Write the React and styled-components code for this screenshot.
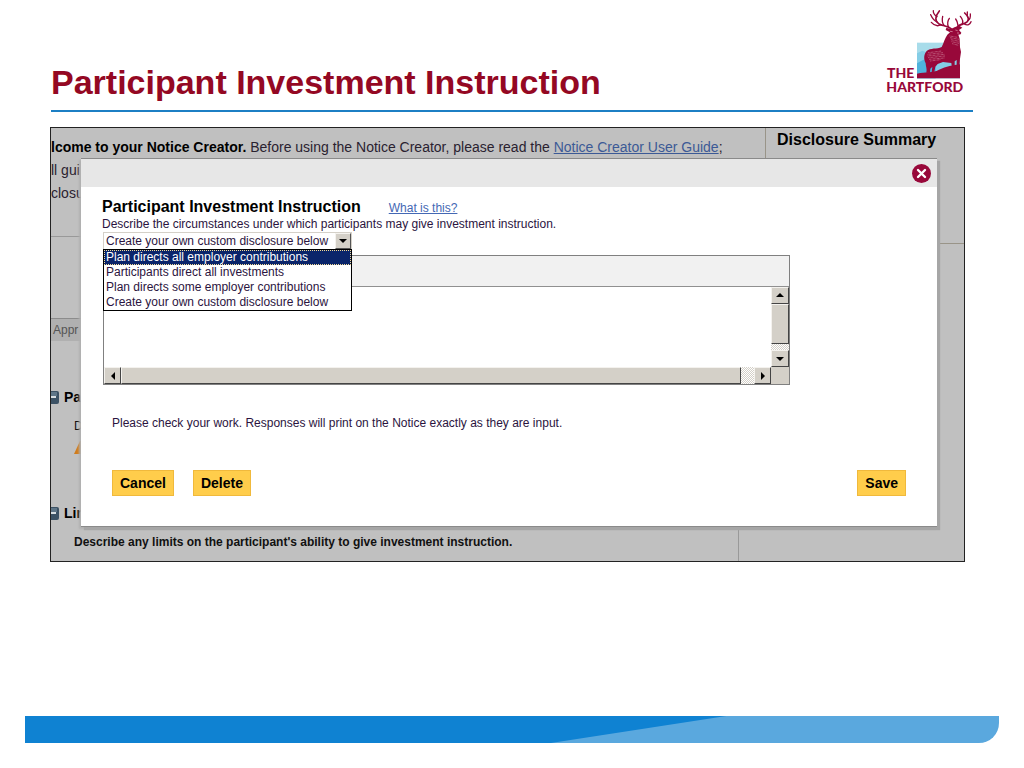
import React, { useState } from "react";
import styled, { createGlobalStyle } from "styled-components";

const disclosures = [
  "Plan directs all employer contributions",
  "Participants direct all investments",
  "Plan directs some employer contributions",
  "Create your own custom disclosure below"
];

const Logo = () => (
  <LogoArt viewBox="54 24 258 258" role="img" aria-label="The Hartford">
    <rect x="144" y="128" width="129" height="107" fill="#a8dcea" />
    <path d="M144 160 L160 152 L176 158 L190 150 L273 180 V235 H144Z" fill="#84cde6" />
    <path d="M144 190 L162 180 L176 176 L200 200 V235 H144Z" fill="#4fb2dc" />
    <path
      d="M144 221 C170 214 190 220 210 209 C232 199 252 195 273 193 V235 H144Z"
      fill="#98083a"
    />
    <path
      d="M172 218 C175 207 170 200 170 190 C163 176 165 162 173 153 C184 143 204 148 218 141
         C224 129 228 113 235 104 L243 97 L230 90 L232 83 L246 87 L258 81 L272 78 L280 83
         L270 90 L277 98 L275 103 L268 104 L272 116 L273 142 L276 156 L273 176 L271 200 L263 202
         L263 180 L257 184 L257 203 L249 205 L247 189 L222 186 L206 192 L199 200 L196 215
         L188 217 L190 200 L184 206 L183 219Z"
      fill="#98083a"
    />
    <g fill="none" stroke="#98083a" strokeLinecap="round" strokeLinejoin="round">
      <path
        strokeWidth="5"
        d="M249 88 C236 76 222 79 209 71 C197 63 198 49 211 33 M263 84 C269 70 285 75 295 65 C302 57 297 48 287 39"
      />
      <path
        strokeWidth="4"
        d="M205 66 C195 62 190 55 185 44 M204 50 C196 45 192 40 193 32 M216 74 C204 81 194 75 187 67
           M226 77 C217 67 219 58 221 49 M238 80 C234 69 236 62 241 55
           M297 61 C303 58 305 52 304 42 M296 51 C294 45 295 42 295 36
           M286 72 C296 78 303 73 306 65 M279 74 C284 64 281 57 274 49 M267 76 C266 67 264 62 260 57"
      />
    </g>
    <g fill="none" stroke="#e2a9b9" strokeWidth="2" strokeDasharray="2 2">
      <path
        d="M178 158 L218 153 M176 163 L222 158 M176 168 L226 163 M178 173 L228 168 M180 178 L226 174
           M184 183 L214 179 M242 108 L266 112 M243 113 L270 118 M246 119 L270 124 M248 125 L270 130 M250 131 L268 136"
      />
    </g>
    <path d="M243 94 l8 1 M259 90 l7 2 M264 99 l6 0" stroke="#e2a9b9" strokeWidth="2" />
    <LogoText x="54" y="235">THE</LogoText>
    <LogoText x="52" y="277">HARTFORD</LogoText>
  </LogoArt>
);

const Arrow = ({ direction }) => {
  const points = {
    up: "1,6 9,6 5,2",
    down: "1,3 9,3 5,7",
    left: "7,1 7,9 3,5",
    right: "3,1 3,9 7,5"
  };
  return (
    <svg width="10" height="10" viewBox="0 0 10 10" aria-hidden="true">
      <polygon points={points[direction]} fill="#000" />
    </svg>
  );
};

const Collapse = () => (
  <svg width="8" height="13" viewBox="0 0 8 13" aria-hidden="true">
    <path d="M0 0H6Q8 0 8 2V11Q8 13 6 13H0Z" fill="#3c5265" />
    <path d="M0 1H6V5H0Z" fill="#5f7688" />
    <path d="M0 5H5V7H0Z" fill="#d9dfe3" />
  </svg>
);

function App() {
  const [chosen, setChosen] = useState(disclosures[3]);
  const [text, setText] = useState("");

  return (
    <Slide>
      <GlobalStyle />
      <Header>
        <Title>Participant Investment Instruction</Title>
        <Logo />
      </Header>

      <Screen>
        <Backdrop>
          <TopRow>
            <Intro>
              <b>lcome to your Notice Creator.</b> Before using the Notice
              Creator, please read the <a href="#guide">Notice Creator User Guide</a>;
              <br />
              ll gui
              <br />
              closu
            </Intro>
            <Summary>Disclosure Summary</Summary>
          </TopRow>
          <BottomRow>
            <Sections>
              <Tab>Appr</Tab>
              <Section>
                <SectionTitle>
                  <Collapse /> Pa
                </SectionTitle>
                <SectionText>D</SectionText>
                <Warning width="14" height="13" viewBox="0 0 14 13" aria-hidden="true">
                  <path d="M0 13L6 0H14V13Z" fill="#d07c1c" />
                </Warning>
              </Section>
              <Section>
                <SectionTitle>
                  <Collapse /> Lir
                </SectionTitle>
                <SectionText $bold>
                  Describe any limits on the participant's ability to give
                  investment instruction.
                </SectionText>
              </Section>
            </Sections>
            <Side />
          </BottomRow>
        </Backdrop>

        <Modal role="dialog" aria-labelledby="modal-title">
          <ModalBar>
            <Close type="button" aria-label="Close">
              <svg width="19" height="19" viewBox="0 0 19 19">
                <circle cx="9.5" cy="9.5" r="9.5" fill="#98083a" />
                <path
                  d="M6 6L13 13M13 6L6 13"
                  stroke="#fff"
                  strokeWidth="2.4"
                  strokeLinecap="round"
                />
              </svg>
            </Close>
          </ModalBar>
          <ModalBody>
            <Heading>
              <h2 id="modal-title">Participant Investment Instruction</h2>
              <a href="#help">What is this?</a>
            </Heading>
            <Label htmlFor="disclosure">
              Describe the circumstances under which participants may give
              investment instruction.
            </Label>
            <SelectBox>
              <Select
                id="disclosure"
                value={chosen}
                onChange={e => setChosen(e.target.value)}
              >
                {disclosures.map(d => (
                  <option key={d}>{d}</option>
                ))}
              </Select>
              <SelectArrow>
                <Arrow direction="down" />
              </SelectArrow>
              <List role="listbox" aria-label="Disclosures">
                {disclosures.map((d, i) => (
                  <Item
                    key={d}
                    role="option"
                    aria-selected={i === 0}
                    $active={i === 0}
                    onClick={() => setChosen(d)}
                  >
                    {d}
                  </Item>
                ))}
              </List>
            </SelectBox>
            <Editor>
              <Toolbar />
              <TextBox
                aria-label="Custom disclosure"
                value={text}
                onChange={e => setText(e.target.value)}
              />
              <ScrollBar $vertical>
                <ScrollButton type="button" aria-label="Scroll up">
                  <Arrow direction="up" />
                </ScrollButton>
                <Thumb />
                <Track />
                <ScrollButton type="button" aria-label="Scroll down">
                  <Arrow direction="down" />
                </ScrollButton>
              </ScrollBar>
              <ScrollBar>
                <ScrollButton type="button" aria-label="Scroll left">
                  <Arrow direction="left" />
                </ScrollButton>
                <Thumb />
                <Track $wide />
                <ScrollButton type="button" aria-label="Scroll right">
                  <Arrow direction="right" />
                </ScrollButton>
              </ScrollBar>
              <Corner />
            </Editor>
            <Note>
              Please check your work. Responses will print on the Notice exactly
              as they are input.
            </Note>
            <Actions>
              <Button type="button">Cancel</Button>
              <Button type="button">Delete</Button>
              <Spacer />
              <Button type="button">Save</Button>
            </Actions>
          </ModalBody>
        </Modal>
      </Screen>

      <Footer />
    </Slide>
  );
}

const GlobalStyle = createGlobalStyle`
  * {
    box-sizing: border-box;
  }

  body {
    margin: 0;
    background: #fff;
    font-family: "Liberation Sans", Arial, sans-serif;
  }
`;

const Slide = styled.div`
  display: flex;
  flex-direction: column;
  min-height: 100vh;
  padding-bottom: 25px;
`;

const Header = styled.header`
  display: flex;
  justify-content: space-between;
  align-items: flex-end;
  margin: 0 51px;
  padding-top: 8px;
  border-bottom: 2px solid #1c7fc4;
`;

const Title = styled.h1`
  margin: 0;
  padding-bottom: 8px;
  color: #940823;
  font-size: 34px;
  line-height: 40px;
`;

const LogoArt = styled.svg`
  width: 86px;
  height: 86px;
  margin-bottom: 16px;
  overflow: visible;
`;

const LogoText = styled.text`
  fill: #98083a;
  font-family: Lato, sans-serif;
  font-size: 42px;
  font-weight: 900;
`;

const Screen = styled.main`
  position: relative;
  margin: 15px 59px 0 50px;
  border: 1px solid #222;
  background: #c0c0c0;
`;

const Backdrop = styled.div`
  overflow: hidden;
  color: #2a2230;
`;

const TopRow = styled.div`
  display: flex;
  align-items: flex-start;
`;

const Intro = styled.div`
  flex: 1;
  height: 109px;
  padding-top: 8px;
  border-bottom: 1px solid #999;
  font-size: 14px;
  line-height: 23px;
  white-space: nowrap;

  b {
    color: #000;
  }

  a {
    color: #3c5a96;
  }
`;

const Summary = styled.h3`
  width: 199px;
  height: 116px;
  margin: 0;
  padding: 2px 0 0 11px;
  border-left: 1px solid #999488;
  border-bottom: 1px solid #999488;
  color: #000;
  font-size: 16px;
  line-height: 20px;
`;

const BottomRow = styled.div`
  display: flex;
  height: 317px;
`;

const Sections = styled.div`
  flex: 1;
  padding-top: 74px;
  border-right: 1px solid #999;
`;

const Side = styled.div`
  width: 225px;
`;

const Tab = styled.div`
  width: 120px;
  margin-bottom: 46px;
  padding-left: 2px;
  border-top: 1px solid #8c8c8c;
  background: #b0b0b0;
  color: #555;
  font-size: 12px;
  line-height: 22px;
`;

const Section = styled.section`
  height: 116px;
`;

const SectionTitle = styled.h3`
  display: flex;
  align-items: center;
  gap: 5px;
  margin: 0;
  color: #000;
  font-size: 14px;
  line-height: 20px;
`;

const SectionText = styled.p`
  margin: 9px 0 0 23px;
  color: #111;
  font-size: 12px;
  font-weight: ${props => (props.$bold ? "bold" : "normal")};
  line-height: 20px;
`;

const Warning = styled.svg`
  display: block;
  margin: 5px 0 0 23px;
`;

const Modal = styled.div`
  position: absolute;
  top: 30px;
  right: 27px;
  bottom: 34px;
  left: 30px;
  border-top: 1px solid #8a8a8a;
  border-bottom: 1px solid #8a8a8a;
  background: #fff;
  box-shadow: 3px 3px 1px #a6a6a6, -2px 2px 2px #b0b0b0;
`;

const ModalBar = styled.div`
  display: flex;
  justify-content: flex-end;
  align-items: center;
  height: 28px;
  padding-right: 6px;
  background: #e7e7e7;
`;

const Close = styled.button`
  display: flex;
  padding: 0;
  border: 0;
  background: none;
  cursor: pointer;
`;

const ModalBody = styled.div`
  padding: 10px 31px 0 21px;
  color: #2b1440;
  font-size: 12px;
`;

const Heading = styled.div`
  display: flex;
  align-items: baseline;
  gap: 28px;

  h2 {
    margin: 0;
    color: #000;
    font-size: 16px;
    line-height: 20px;
  }

  a {
    color: #4468b4;
  }
`;

const Label = styled.label`
  display: block;
  line-height: 15px;
`;

const SelectBox = styled.div`
  position: relative;
  width: 249px;
  margin-left: 1px;
`;

const Select = styled.select`
  display: block;
  width: 100%;
  height: 18px;
  padding: 0 20px 0 2px;
  border: 1px solid #d4d0c8;
  border-radius: 0;
  background: #fff;
  color: #2b1440;
  font: 12px "Liberation Sans", Arial, sans-serif;
  appearance: none;
`;

const SelectArrow = styled.span`
  position: absolute;
  top: 1px;
  right: 1px;
  display: flex;
  align-items: center;
  justify-content: center;
  width: 16px;
  height: 16px;
  border: 1px solid;
  border-color: #f4f2ee #555 #555 #f4f2ee;
  background: #d4d0c8;
  pointer-events: none;
`;

const List = styled.ul`
  position: absolute;
  top: 17px;
  left: 0;
  width: 100%;
  margin: 0;
  padding: 0;
  border: 1px solid #000;
  background: #fff;
  list-style: none;
`;

const Item = styled.li`
  padding-left: 2px;
  background: ${props => (props.$active ? "#0a246a" : "#fff")};
  color: ${props => (props.$active ? "#fff" : "#2b1440")};
  line-height: 15px;
  white-space: nowrap;

  ${props =>
    props.$active &&
    `
    outline: 1px dotted #f5db95;
    outline-offset: -1px;
  `}
`;

const Editor = styled.div`
  display: grid;
  grid-template-columns: 1fr 18px;
  grid-template-rows: 31px 80px 17px;
  margin: 5px 116px 0 1px;
  border: 1px solid #808080;
`;

const Toolbar = styled.div`
  grid-column: span 2;
  border-bottom: 1px solid #909090;
  background: #f1f1f1;
`;

const TextBox = styled.textarea`
  width: 100%;
  height: 100%;
  padding: 4px;
  border: 0;
  outline: 0;
  background: #fff;
  font: 12px "Liberation Sans", Arial, sans-serif;
  overflow: hidden;
  resize: none;
`;

const ScrollBar = styled.div`
  display: flex;
  flex-direction: ${props => (props.$vertical ? "column" : "row")};
  min-width: 0;
`;

const ScrollButton = styled.button`
  display: flex;
  flex: 0 0 17px;
  align-items: center;
  justify-content: center;
  padding: 0;
  border: 1px solid;
  border-color: #f4f2ee #444 #444 #f4f2ee;
  background: #d4d0c8;
`;

const Thumb = styled.div`
  flex: 1;
  border: 1px solid;
  border-color: #f4f2ee #444 #444 #f4f2ee;
  background: #d4d0c8;
`;

const Track = styled.div`
  flex: 0 0 ${props => (props.$wide ? 13 : 6)}px;
  background: repeating-conic-gradient(#d4d0c8 0 25%, #fff 0 50%) 0 0 / 2px 2px;
`;

const Corner = styled.div`
  background: #d4d0c8;
`;

const Note = styled.p`
  margin: 30px 0 0 10px;
  line-height: 16px;
`;

const Actions = styled.div`
  display: flex;
  gap: 19px;
  margin: 39px 0 0 10px;
`;

const Spacer = styled.div`
  flex: 1;
`;

const Button = styled.button`
  height: 26px;
  padding: 0 7px;
  border: 1px solid #f0b93c;
  background: #ffcd4b;
  color: #000;
  font: bold 14px "Liberation Sans", Arial, sans-serif;
  cursor: pointer;
`;

const Footer = styled.footer`
  height: 27px;
  margin: auto 25px 0;
  border-bottom-right-radius: 20px;
  background: #5aa8de;
  overflow: hidden;

  &::before {
    content: "";
    display: block;
    width: 72%;
    height: 100%;
    background: #0f82d2;
    clip-path: polygon(0 0, 100% 0, 75% 100%, 0 100%);
  }
`;

export default App;
